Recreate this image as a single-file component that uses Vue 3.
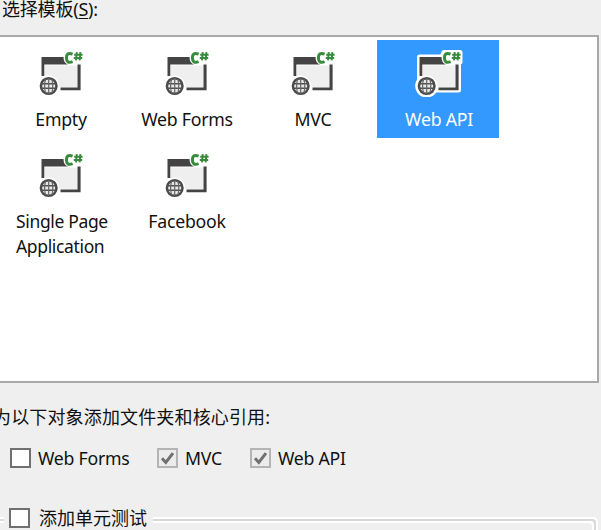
<script setup>
const templates = [
  { name: 'Empty' },
  { name: 'Web Forms' },
  { name: 'MVC' },
  { name: 'Web API', selected: true },
  { name: 'Single Page Application', wrapped: true },
  { name: 'Facebook' },
]
const references = [
  { name: 'Web Forms', cls: 'forms', checked: false },
  { name: 'MVC', cls: 'mvc', checked: true },
  { name: 'Web API', cls: 'api', checked: true },
]
</script>

<template>
  <main class="dialog">
    <div class="heading">选择模板(<u>S</u>):</div>
    <section class="templates">
      <div v-for="t in templates" :key="t.name" class="item" :class="{ selected: t.selected }">
        <svg class="icon" viewBox="0 0 50 50" width="50" height="50">
          <g v-if="t.selected" fill="#fff" stroke="#fff" stroke-width="5" stroke-linejoin="round">
            <path d="M6.5 10H29L31 5.5H47V15H45.5V43H22L13 46L6.5 42Z" />
            <circle cx="13.7" cy="39" r="9" />
          </g>
          <path d="M10 18.5H42V40H10Z" fill="#efefef" />
          <path d="M6.5 10H28.5Q28.5 16 33 17.6H9.3V29H6.5ZM42.5 17.5H45.6V43.3H25.5V40.6H42.5Z" fill="#444" />
          <circle cx="13.7" cy="39" r="10.6" fill="#fff" />
          <circle cx="13.7" cy="39" r="7.8" fill="#e8e8e8" stroke="#4a4a4a" stroke-width="2.5" />
          <path d="M6 36.7H21.4M6 41.3H21.4" fill="none" stroke="#505050" stroke-width="1.6" />
          <path d="M13.7 31V47M10.6 32Q8.6 39 10.6 46M16.8 32Q18.8 39 16.8 46" fill="none" stroke="#666" stroke-width="1.2" />
          <path d="M37.6 7.2Q31.4 4.8 31.4 10.8Q31.4 17 37.6 14.6" fill="none" stroke="#388a3c" stroke-width="3" />
          <path d="M41.8 5.2L41 13.4M45.4 5.2L44.6 13.4M39.2 7.7H47.6M38.8 11H47.2" fill="none" stroke="#388a3c" stroke-width="2" />
        </svg>
        <div class="name" :class="{ wrapped: t.wrapped }">{{ t.name }}</div>
      </div>
    </section>
    <div class="subheading">为以下对象添加文件夹和核心引用:</div>
    <div class="references">
      <label v-for="r in references" :key="r.name" class="choice" :class="r.cls">
        <span class="box" :class="{ checked: r.checked }">
          <svg v-if="r.checked" width="17" height="16" viewBox="0 0 17 16"><path d="M3 8.2L6.8 12.4L14 3.2" fill="none" stroke="#707070" stroke-width="3" /></svg>
        </span>
        <span class="text">{{ r.name }}</span>
      </label>
    </div>
    <div class="group">
      <span class="stub"></span>
      <label class="choice test"><span class="box"></span><span class="text">添加单元测试</span></label>
      <span class="rule"></span>
    </div>
  </main>
</template>

<style>
body { margin: 0; overflow: hidden; background: #efefef; }
</style>
<style scoped>
* { box-sizing: border-box; }
.dialog {
  width: 601px; height: 530px; overflow: hidden; background: #efefef; color: #111;
  font: 18px/25px "Noto Sans", "Noto Sans CJK SC", sans-serif;
}
.heading { height: 35px; padding-left: 2px; line-height: 19px; white-space: nowrap; letter-spacing: -.2px; }
.heading u { text-decoration-thickness: 1px; text-underline-offset: 2px; }
.templates {
  width: 599px; height: 348px; background: #fff; border: 2px solid #a9a9a9; border-left: 0;
  padding-top: 3px; display: grid; grid-template-columns: repeat(4, 122px); grid-auto-rows: 98px;
  gap: 4px; align-content: start;
}
.item { display: flex; flex-direction: column; align-items: center; margin-left: -1px; margin-right: 1px; }
.icon { display: block; flex: none; margin: 7px 0 10px; }
.name { padding-left: 2px; text-align: center; font-size: 17.7px; letter-spacing: -.25px; }
.wrapped { width: 105px; padding: 0; margin-left: 17px; text-align: left; font-size: 17.5px; letter-spacing: -.35px; }
.selected { background: #3399ff; color: #fff; }
.subheading { height: 62px; padding-top: 22px; margin-left: -7px; white-space: nowrap; letter-spacing: .15px; }
.references { display: flex; height: 26px; padding-left: 10px; }
.references .text { font-size: 17.7px; letter-spacing: -.25px; }
.choice { display: flex; align-items: center; height: 26px; gap: 7px; white-space: nowrap; }
.forms { width: 147px; }
.mvc { width: 93px; }
.box { width: 21px; height: 20px; flex: none; border: 2px solid #707070; background: #fff; }
.checked { border-color: #b4b4b4; background: #ececec; }
.checked svg { display: block; }
.group { display: flex; align-items: flex-start; padding-top: 34px; }
.test { gap: 9px; width: 144px; }
.stub { width: 4px; height: 6px; margin: 12px 5px 0 0; border: solid #fff; border-width: 2px 0; background: #d9d9d9; }
.rule { width: 445px; height: 24px; margin-top: 12px; border: 2px solid #fff; border-left: 0; border-bottom: 0; border-radius: 0 5px 0 0; box-shadow: inset -2px 2px #d9d9d9, inset -4px 4px #fff; }
</style>
